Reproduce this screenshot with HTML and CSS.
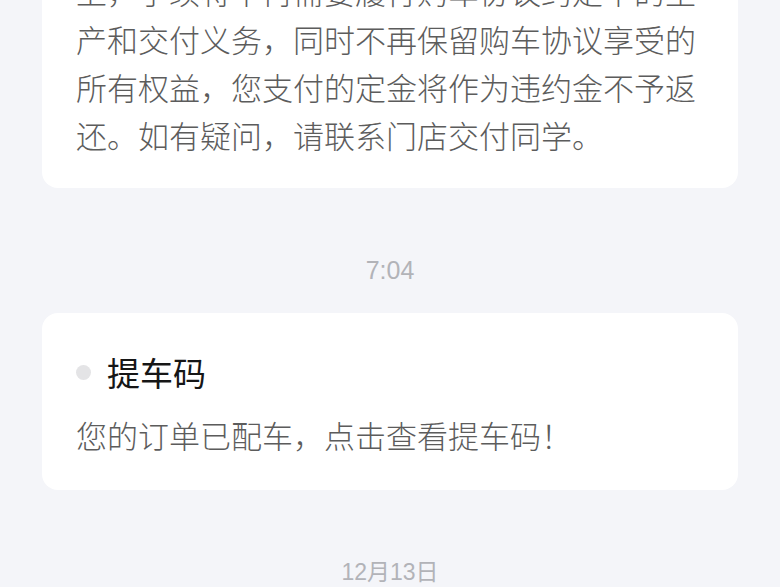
FILE: index.html
```html
<!DOCTYPE html>
<html lang="zh-CN">
<head>
    <meta charset="UTF-8">
    <meta name="viewport" content="width=device-width, initial-scale=1.0">
    <title>消息</title>
    <link rel="stylesheet" href="styles.css">
</head>
<body>
    <div class="feed">
        <div class="card">
            <p class="card-text">上，手续将不再需要履行购车协议约定中的生产和交付义务，同时不再保留购车协议享受的所有权益，您支付的定金将作为违约金不予返还。如有疑问，请联系门店交付同学。</p>
        </div>

        <div class="time">7:04</div>

        <div class="card">
            <div class="card-title">
                <span class="dot"></span>
                <span>提车码</span>
            </div>
            <p class="card-text">您的订单已配车，点击查看提车码！</p>
        </div>

        <div class="time time-date">12月13日</div>
    </div>
</body>
</html>
```

FILE: styles.css
```css
body {
    margin: 0;
    background: #f4f5f9;
    font-family: "Noto Sans CJK SC", "Noto Sans", sans-serif;
    overflow: hidden;
}
.feed {
    margin-top: -70px;
    padding: 0 42px;
}
.card {
    background: #fff;
    border-radius: 16px;
    padding: 37px 34px 29px;
}
.card-title {
    display: flex;
    align-items: center;
    gap: 16px;
    font-size: 33px;
    line-height: 44px;
    color: #161616;
    margin-bottom: 17px;
}
.dot {
    width: 15px;
    height: 15px;
    border-radius: 50%;
    background: #e4e4e6;
}
.card-text {
    margin: 0;
    font-size: 31px;
    font-weight: 300;
    line-height: 48px;
    color: #5c5c5c;
}
.card-title + .card-text {
    margin-bottom: 2px;
}
.time {
    text-align: center;
    font-family: "Liberation Sans", "Noto Sans CJK SC", sans-serif;
    font-size: 25px;
    line-height: 30px;
    color: #b2b3b8;
    margin: 67px 0 28px;
}
.time-date {
    font-size: 23px;
}
```
